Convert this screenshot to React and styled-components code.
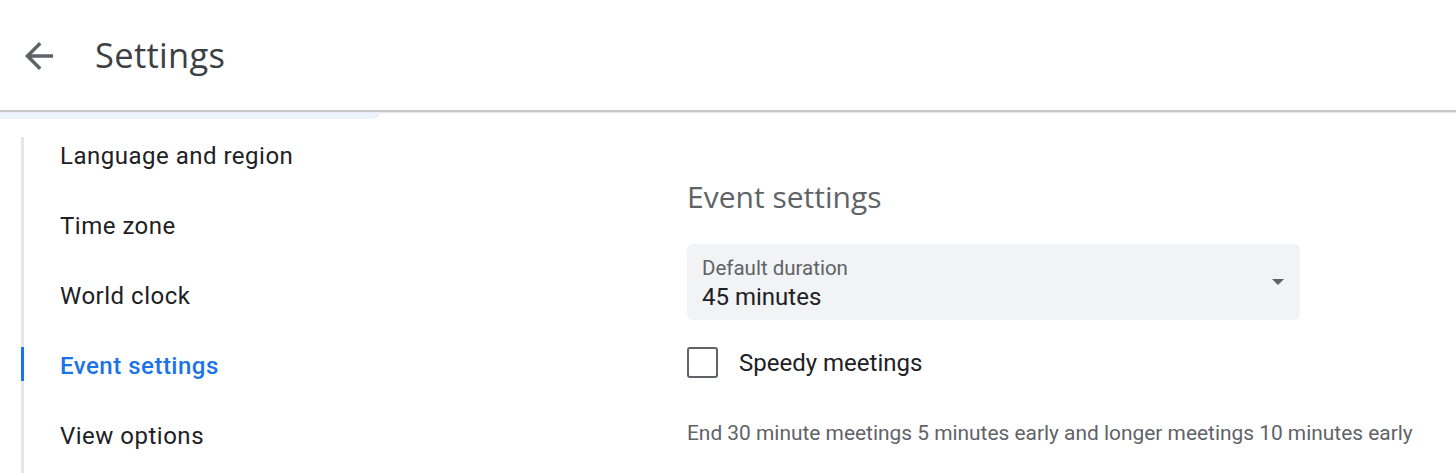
import React from 'react';
import styled, { createGlobalStyle } from 'styled-components';

const GlobalStyle = createGlobalStyle`
    html, body {
        margin: 0;
        padding: 0;
        background: #fff;
        font-family: Roboto, "Liberation Sans", Arial, sans-serif;
        overflow: hidden;
    }
`

const navItems = [
    'Language and region',
    'Time zone',
    'World clock',
    'Event settings',
    'View options',
]

function App() {
    return (
        <Page>
            <GlobalStyle />
            <Header>
                <BackButton aria-label='Back'>
                    <svg width='42' height='42' viewBox='0 0 24 24'>
                        <path fill='#5f6368' d='M20 11H7.83l5.59-5.59L12 4l-8 8 8 8 1.41-1.41L7.83 13H20v-2z' />
                    </svg>
                </BackButton>
                <Title>Settings</Title>
            </Header>
            <ScrollHint />
            <Body>
                <Sidebar>
                    {navItems.map(item => (
                        <NavItem key={item} active={item === 'Event settings'}>
                            {item}
                        </NavItem>
                    ))}
                </Sidebar>
                <Main>
                    <SectionTitle>Event settings</SectionTitle>
                    <Select>
                        <SelectText>
                            <SelectLabel>Default duration</SelectLabel>
                            <SelectValue>45 minutes</SelectValue>
                        </SelectText>
                        <Caret />
                    </Select>
                    <CheckRow>
                        <CheckBox />
                        <CheckLabel>Speedy meetings</CheckLabel>
                    </CheckRow>
                    <Hint>End 30 minute meetings 5 minutes early and longer meetings 10 minutes early</Hint>
                </Main>
            </Body>
        </Page>
    )
}

export default App


const Page = styled.div`
    width: 1456px;
    height: 473px;
    overflow: hidden;
    background: #fff;
`

const Header = styled.header`
    height: 110px;
    display: flex;
    align-items: center;
    border-bottom: 2px solid #c7c8ca;
    box-shadow: 0 1px 1px rgba(60, 64, 67, 0.12);
    box-sizing: content-box;
`

const BackButton = styled.div`
    width: 42px;
    height: 42px;
    margin-left: 18px;
    margin-top: 2px;
    display: flex;
`

const Title = styled.h1`
    margin: 0 0 0 35px;
    font-family: "Open Sans", Roboto, sans-serif;
    font-weight: 400;
    font-size: 34.5px;
    line-height: 44px;
    color: #3c4043;
    letter-spacing: 0.3px;
`

const ScrollHint = styled.div`
    width: 380px;
    height: 7px;
    background: #e8f0fe;
    border-radius: 0 0 24px 0;
    opacity: 0.8;
`

const Body = styled.div`
    display: flex;
`

const Sidebar = styled.nav`
    width: 663px;
    margin-left: 21px;
    margin-top: 18px;
    border-left: 3px solid #e3e5e8;
    display: flex;
    flex-direction: column;
    gap: 36px;
    min-height: 400px;
`

const NavItem = styled.div`
    margin-left: -3px;
    border-left: 3px solid ${p => p.active ? '#1a73e8' : 'transparent'};
    padding: 6px 0 2px 36px;
    font-size: 24px;
    line-height: 26px;
    letter-spacing: 0.5px;
    color: ${p => p.active ? '#1a73e8' : '#202124'};
    font-weight: ${p => p.active ? 500 : 400};
`

const Main = styled.main`
    padding-top: 60px;
    display: flex;
    flex-direction: column;
`

const SectionTitle = styled.h2`
    margin: 0;
    font-family: "Open Sans", Roboto, sans-serif;
    font-weight: 400;
    font-size: 30px;
    line-height: 36px;
    color: #5f6368;
`

const Select = styled.div`
    margin-top: 29px;
    width: 613px;
    height: 76px;
    box-sizing: border-box;
    background: #f1f3f4;
    border-radius: 6px;
    padding: 13px 16px 0 15px;
    display: flex;
    justify-content: space-between;
`

const SelectText = styled.div`
    display: flex;
    flex-direction: column;
    gap: 4px;
`

const SelectLabel = styled.div`
    font-size: 20.5px;
    line-height: 22px;
    color: #5f6368;
`

const SelectValue = styled.div`
    font-size: 24px;
    line-height: 28px;
    color: #202124;
`

const Caret = styled.div`
    width: 0;
    height: 0;
    margin-top: 22px;
    border-left: 6px solid transparent;
    border-right: 6px solid transparent;
    border-top: 6px solid #5f6368;
`

const CheckRow = styled.div`
    margin-top: 27px;
    display: flex;
    align-items: center;
    gap: 21px;
`

const CheckBox = styled.div`
    width: 31px;
    height: 31px;
    box-sizing: border-box;
    border: 2.5px solid #5f6368;
    border-radius: 3px;
`

const CheckLabel = styled.div`
    font-size: 24px;
    line-height: 28px;
    color: #202124;
`

const Hint = styled.div`
    margin-top: 43px;
    font-size: 20.9px;
    line-height: 24px;
    color: #5f6368;
`
